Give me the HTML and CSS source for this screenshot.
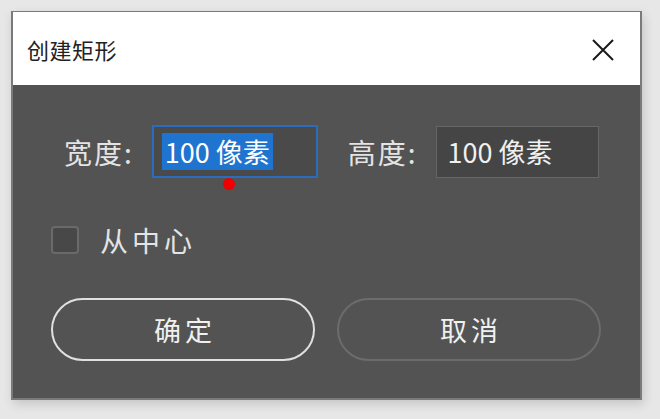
FILE: index.html
```html
<!DOCTYPE html>
<html lang="zh-CN">
<head>
    <meta charset="UTF-8">
    <title>创建矩形</title>
    <link rel="stylesheet" href="styles.css">
</head>
<body>
    <div class="dialog">
        <div class="title-bar">
            <span class="title">创建矩形</span>
            <svg class="close" width="24" height="24" viewBox="0 0 24 24">
                <path d="M2 2 L22 22 M22 2 L2 22" stroke="#1a1a1a" stroke-width="2" fill="none"/>
            </svg>
        </div>
        <div class="body">
            <div class="size-row">
                <label class="field">
                    <span class="label">宽度:</span>
                    <span class="input active"><span class="sel">100 像素</span><span class="dot"></span></span>
                </label>
                <label class="field">
                    <span class="label">高度:</span>
                    <span class="input">100 像素</span>
                </label>
            </div>
            <div class="check-row">
                <span class="checkbox"></span>
                <span class="check-label">从中心</span>
            </div>
            <div class="buttons">
                <button class="btn primary">确定</button>
                <button class="btn">取消</button>
            </div>
        </div>
    </div>
</body>
</html>
```

FILE: styles.css
```css
body {
    margin: 0;
    padding: 11px 18px 19px 11px;
    background-color: #e7e7e7;
    font-family: "Noto Sans CJK SC", "DejaVu Sans", sans-serif;
}
.dialog {
    width: 627px;
    height: 386px;
    border: 2px solid #7a7a7a;
    border-top-width: 1px;
    display: flex;
    flex-direction: column;
    box-shadow: 2px 4px 10px rgba(0, 0, 0, 0.15);
}
.title-bar {
    height: 73px;
    background-color: #fff;
    display: flex;
    align-items: center;
    justify-content: space-between;
    padding: 0 25px 0 14px;
}
.title {
    font-size: 22px;
    color: #222;
    letter-spacing: 0.5px;
}
.close {
    margin-top: 2px;
}
.body {
    flex: 1;
    background-color: #535353;
    padding: 40px 0 0 38px;
    color: #e4e4e4;
}
.size-row {
    display: flex;
    gap: 30px;
    align-items: center;
}
.field {
    display: flex;
    align-items: center;
    gap: 18px;
}
.field:first-child {
    margin-left: 13px;
}
.label {
    font-size: 28px;
    letter-spacing: 2px;
}
.input {
    position: relative;
    display: flex;
    align-items: center;
    width: 163px;
    height: 52px;
    padding-left: 11px;
    background-color: #454545;
    border: 1px solid #666;
    font-size: 27px;
    color: #f0f0f0;
    box-sizing: border-box;
}
.input.active {
    width: 166px;
    height: 53px;
    border: 2px solid #2a6cbd;
    background-color: #4a4a4a;
    padding-left: 8px;
}
.sel {
    background-color: #1f74d0;
    color: #fff;
    padding: 0 3px;
    line-height: 37px;
}
.dot {
    position: absolute;
    left: 69px;
    bottom: -14px;
    width: 12px;
    height: 12px;
    border-radius: 50%;
    background-color: #f00000;
}
.check-row {
    display: flex;
    align-items: center;
    gap: 21px;
    margin-top: 42px;
}
.checkbox {
    width: 24px;
    height: 24px;
    border: 2px solid #6a6a6a;
    border-radius: 4px;
    background-color: #484848;
}
.check-label {
    font-size: 28px;
    letter-spacing: 4px;
}
.buttons {
    display: flex;
    gap: 22px;
    margin-top: 38px;
}
.btn {
    width: 264px;
    height: 63px;
    border-radius: 32px;
    border: 2px solid #6c6c6c;
    background-color: transparent;
    color: #f0f0f0;
    font-family: inherit;
    font-size: 27px;
    letter-spacing: 4px;
    padding: 0 0 0 4px;
}
.btn.primary {
    border-color: #e0e0e0;
}
```
